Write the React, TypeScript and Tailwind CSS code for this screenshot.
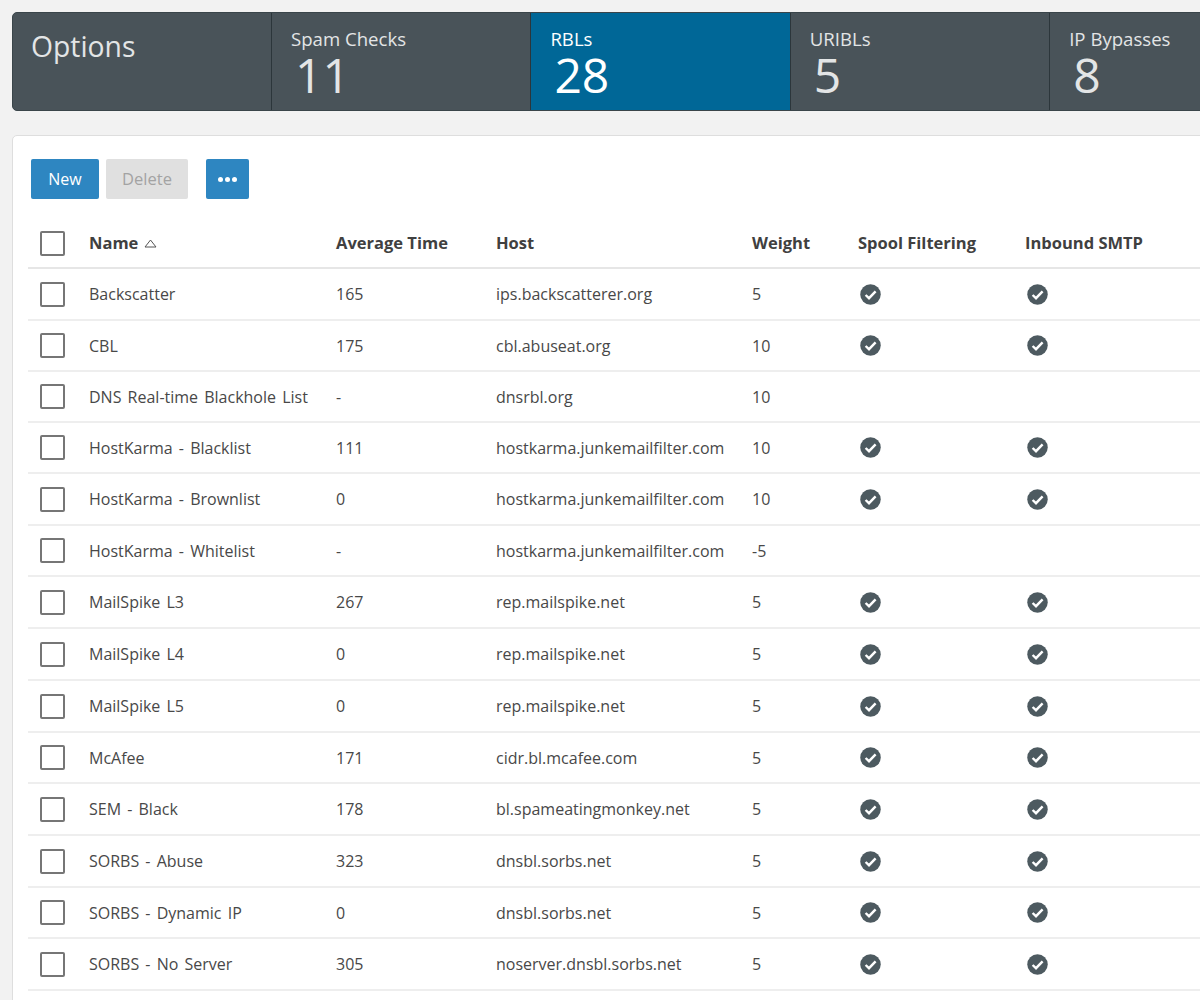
const rows: [string, string, string, string, boolean, string][] = [
  ["Backscatter", "165", "ips.backscatterer.org", "5", true, "h-[52px]"],
  ["CBL", "175", "cbl.abuseat.org", "10", true, "h-[51px]"],
  ["DNS Real-time Blackhole List", "-", "dnsrbl.org", "10", false, "h-[51px]"],
  ["HostKarma - Blacklist", "111", "hostkarma.junkemailfilter.com", "10", true, "h-[51px]"],
  ["HostKarma - Brownlist", "0", "hostkarma.junkemailfilter.com", "10", true, "h-[52px]"],
  ["HostKarma - Whitelist", "-", "hostkarma.junkemailfilter.com", "-5", false, "h-[51px]"],
  ["MailSpike L3", "267", "rep.mailspike.net", "5", true, "h-[52px]"],
  ["MailSpike L4", "0", "rep.mailspike.net", "5", true, "h-[52px]"],
  ["MailSpike L5", "0", "rep.mailspike.net", "5", true, "h-[52px]"],
  ["McAfee", "171", "cidr.bl.mcafee.com", "5", true, "h-[51px]"],
  ["SEM - Black", "178", "bl.spameatingmonkey.net", "5", true, "h-[52px]"],
  ["SORBS - Abuse", "323", "dnsbl.sorbs.net", "5", true, "h-[52px]"],
  ["SORBS - Dynamic IP", "0", "dnsbl.sorbs.net", "5", true, "h-[51px]"],
  ["SORBS - No Server", "305", "noserver.dnsbl.sorbs.net", "5", true, "h-[52px]"],
];

function Check() {
  return (
    <svg width="21" height="21" viewBox="0 0 21 21" className="ml-[2px] block">
      <circle cx="10.5" cy="10.5" r="10.25" fill="#4d5a60" />
      <path d="M5.6 11 L9 14.2 L15.6 7.4" fill="none" stroke="#ffffff" strokeWidth="2.4" />
    </svg>
  );
}

function Box() {
  return <div className="h-[25px] w-[25px] rounded-[2px] border-[2px] border-[#767676] bg-white" />;
}

function Tab({ label, value, active }: { label: string; value: string; active?: boolean }) {
  return (
    <div className={`w-[259.4px] shrink-0 border-l border-[#2c363b] pl-[19px] pt-[13px] ${active ? "bg-[#006797] text-white" : "text-[#e3e5e6]"}`}>
      <div className="text-[18.6px] leading-[26px]">{label}</div>
      <div className="pl-[4px] text-[48px] leading-[46px]">{value}</div>
    </div>
  );
}

export default function App() {
  return (
    <div className="h-[1000px] w-[1200px] overflow-hidden bg-[#f2f2f2] pl-3 pt-3 font-['Open_Sans','Noto_Sans',sans-serif]">
      <div className="flex h-[99px] w-[1320px] overflow-hidden rounded-[5px] border border-[#3a454a] bg-[#495359]">
        <div className="w-[258px] shrink-0 pl-[18px] pt-[13px] text-[28.3px] leading-[40px] text-[#e3e5e6]">Options</div>
        <Tab label="Spam Checks" value="11" />
        <Tab label="RBLs" value="28" active />
        <Tab label="URIBLs" value="5" />
        <Tab label="IP Bypasses" value="8" />
      </div>

      <div className="mt-6 w-[1320px] rounded-[5px] border border-[#dedede] bg-white pb-10 pl-[15px] pt-[23px]">
        <div className="ml-[3px] flex">
          <button className="h-10 w-[68px] rounded-[2px] bg-[#2e86c1] text-[16px] text-white">New</button>
          <button className="ml-[7px] h-10 w-[82px] rounded-[2px] bg-[#e0e0e0] text-[16.5px] text-[#a3a3a3]">Delete</button>
          <button className="ml-[18px] flex h-10 w-[43px] items-center justify-center gap-[2px] rounded-[2px] bg-[#2e86c1]">
            <span className="h-[5px] w-[5px] rounded-full bg-white" />
            <span className="h-[5px] w-[5px] rounded-full bg-white" />
            <span className="h-[5px] w-[5px] rounded-full bg-white" />
          </button>
        </div>

        <table className="mt-[19px] w-[1172px] table-fixed border-collapse text-left text-[16px] text-[#484848]">
          <colgroup>
            <col className="w-[61px]" />
            <col className="w-[247px]" />
            <col className="w-[160px]" />
            <col className="w-[256px]" />
            <col className="w-[106px]" />
            <col className="w-[167px]" />
            <col className="w-[175px]" />
          </colgroup>
          <thead>
            <tr className="h-[50px] border-b-2 border-[#e6e6e6] text-[16.5px] font-bold text-[#404040]">
              <th className="pl-[12px] pt-[2px]"><Box /></th>
              <th className="pt-[2px]">
                <span className="inline-flex items-center gap-[6px]">
                  Name
                  <svg width="13" height="9" viewBox="0 0 13 9">
                    <path d="M6.5 1 L12 8 H1 Z" fill="none" stroke="#555555" strokeWidth="1" />
                  </svg>
                </span>
              </th>
              <th className="pt-[2px]">Average Time</th>
              <th className="pt-[2px]">Host</th>
              <th className="pt-[2px]">Weight</th>
              <th className="pt-[2px]">Spool Filtering</th>
              <th className="pt-[2px]">Inbound SMTP</th>
            </tr>
          </thead>
          <tbody>
            {rows.map(([name, time, host, weight, on, height]) => (
              <tr key={name} className={`border-b-2 border-[#eeeeee] ${height}`}>
                <td className="pl-[12px]"><Box /></td>
                <td className="[word-spacing:2px]">{name}</td>
                <td>{time}</td>
                <td>{host}</td>
                <td>{weight}</td>
                <td>{on && <Check />}</td>
                <td>{on && <Check />}</td>
                
              </tr>
            ))}
          </tbody>
        </table>
      </div>
    </div>
  );
}
